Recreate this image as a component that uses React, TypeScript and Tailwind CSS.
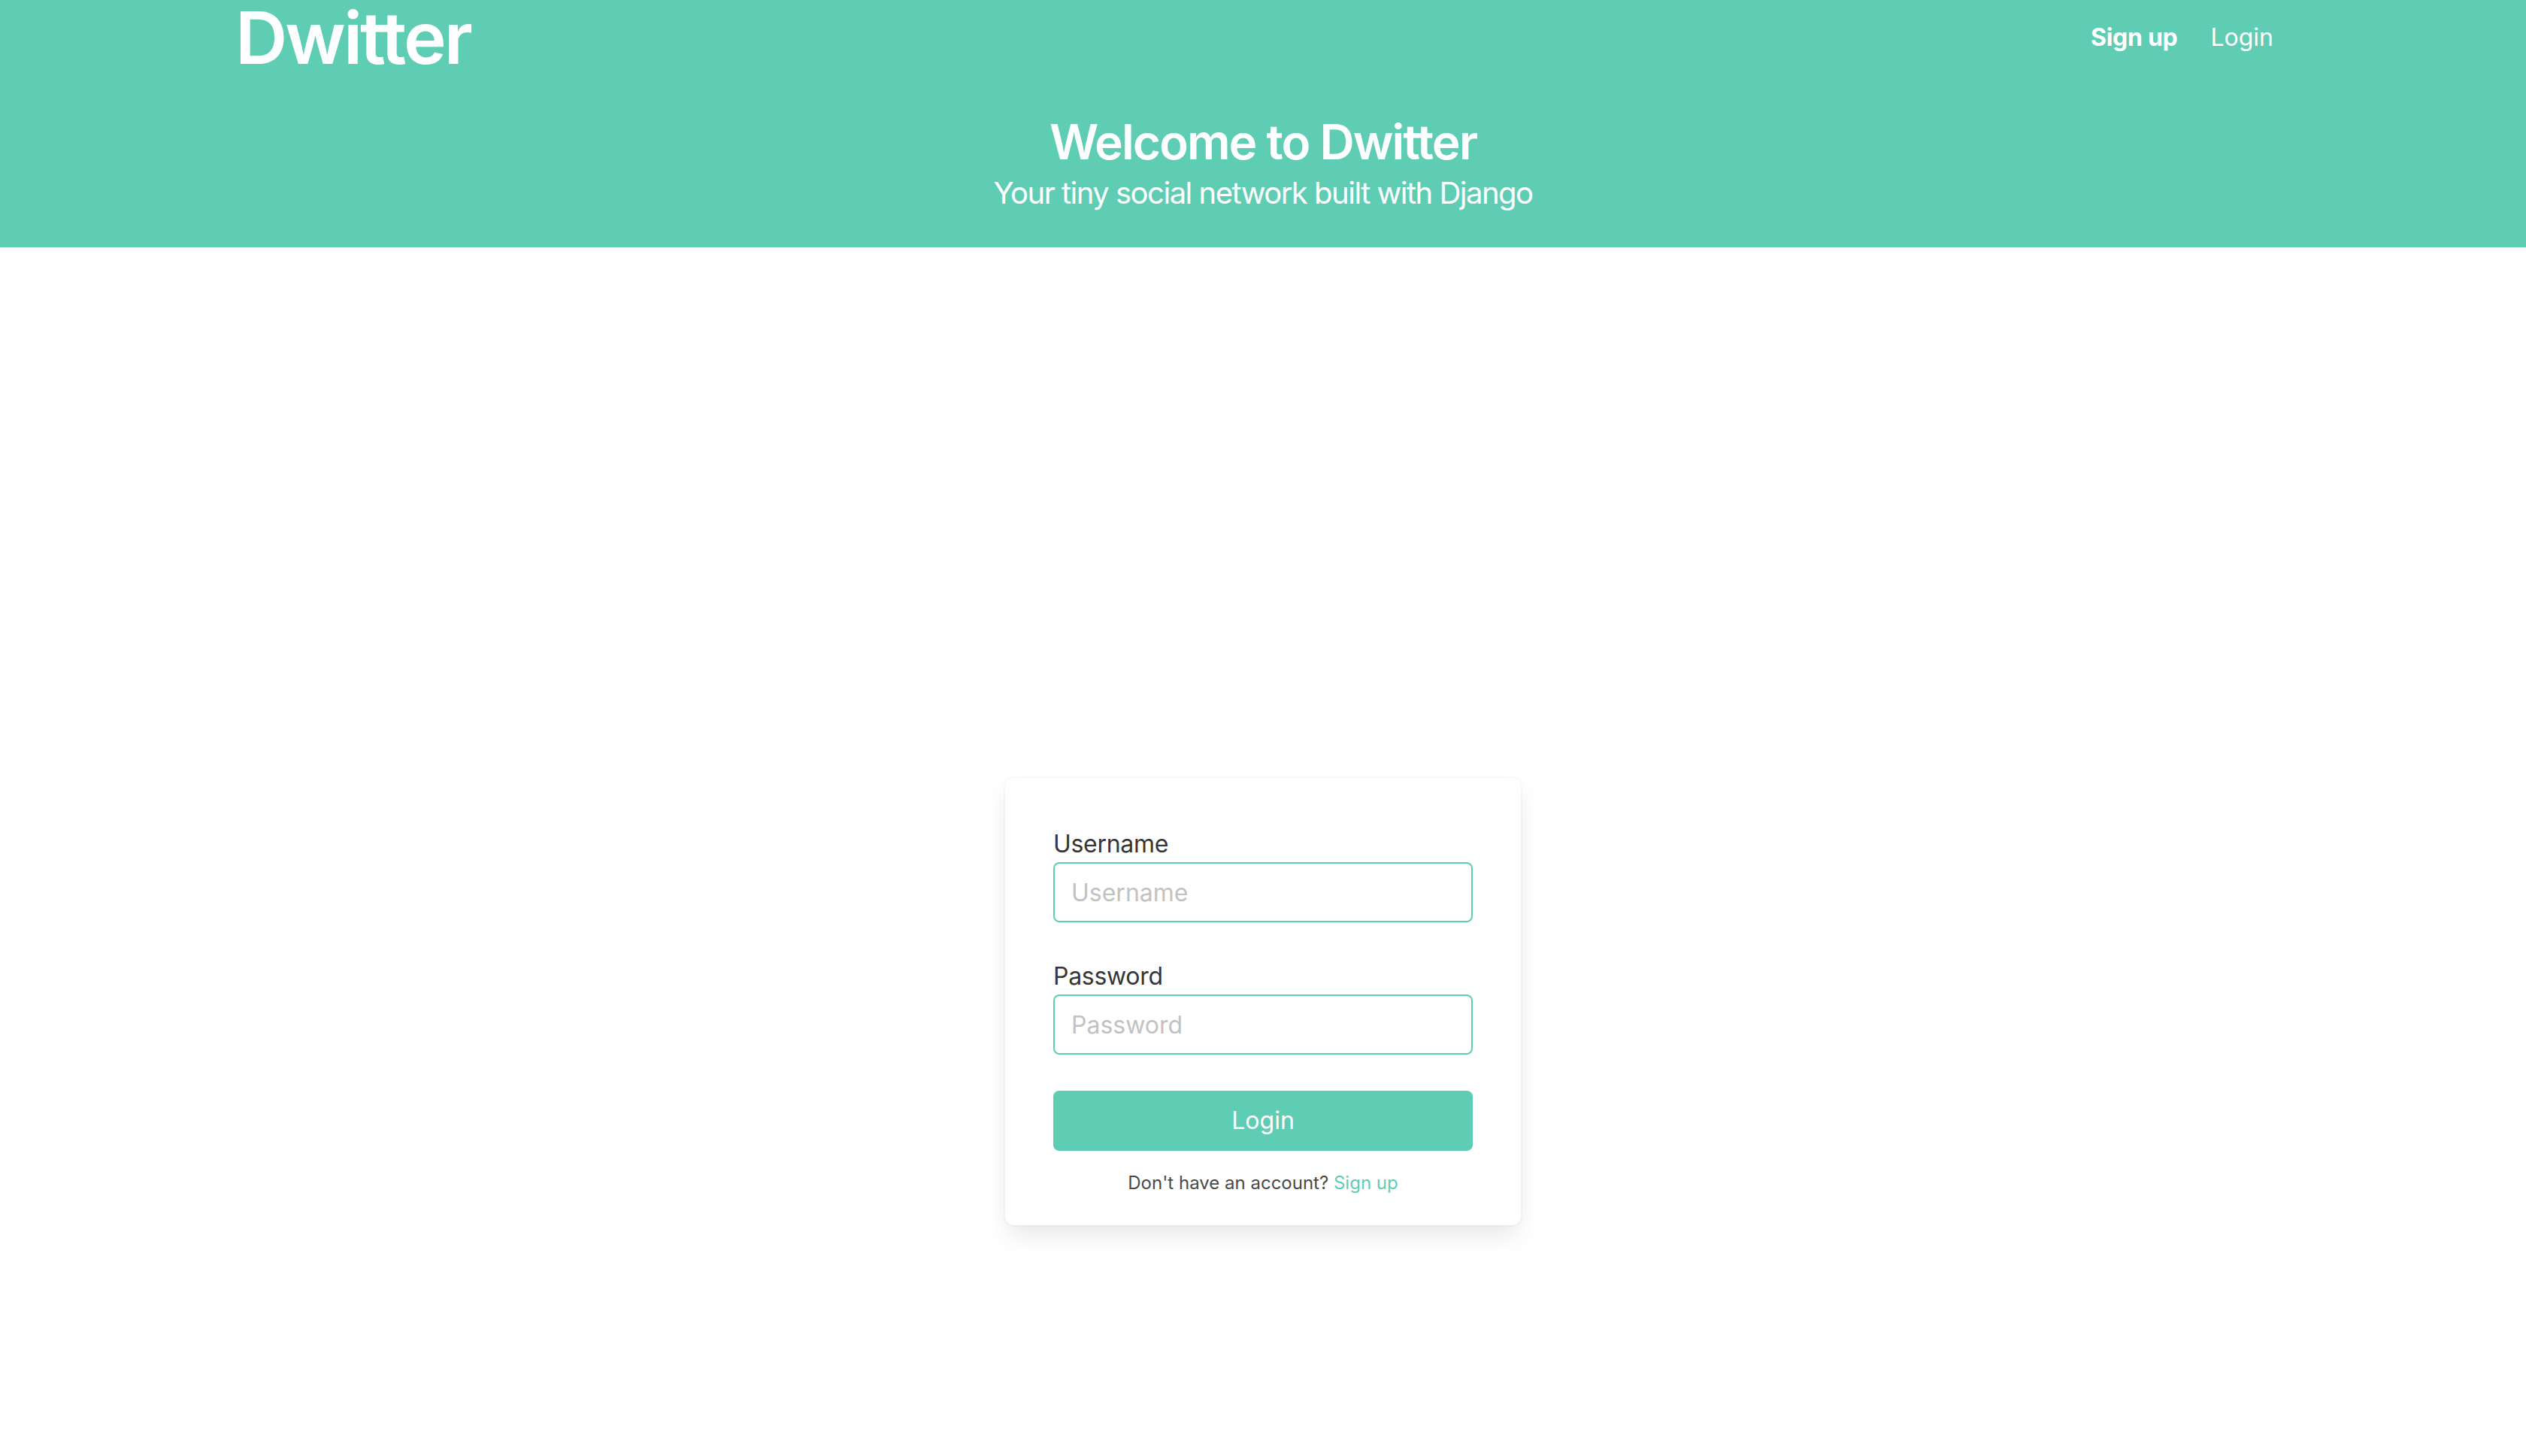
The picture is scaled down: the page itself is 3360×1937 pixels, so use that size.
import React from "react";

const font = { fontFamily: "Inter, 'Noto Sans', sans-serif" };

const Header = () => (
  <header className="bg-[#5fcdb4] text-white h-[329px] px-[313px]">
    <div className="flex justify-between items-start">
      <h1 className="text-[96px] leading-none font-semibold tracking-[-3px] mt-[2px]">Dwitter</h1>
      <nav className="flex items-center gap-[44px] pt-[26px] pr-[23px] text-[32px] leading-[48px]">
        <a className="font-bold tracking-[-0.3px]">Sign up</a>
        <a>Login</a>
      </nav>
    </div>
    <div className="text-center mt-[55px]">
      <h2 className="text-[64px] leading-[72px] font-semibold tracking-[-2px]">Welcome to Dwitter</h2>
      <p className="text-[40px] leading-[50px] mt-[7px] tracking-[-1.5px]">Your tiny social network built with Django</p>
    </div>
  </header>
);

const Field = ({ label, type }: { label: string; type: string }) => (
  <div>
    <label className="block text-[32px] leading-[48px] text-[#363636] tracking-[-0.3px]">{label}</label>
    <input
      type={type}
      placeholder={label}
      className="block w-full h-[80px] border-2 border-[#5fcdb4] rounded-[8px] px-[22px] text-[32px] text-[#363636] placeholder:text-[#c2c2c2] outline-none"
      style={font}
    />
  </div>
);

const LoginCard = () => (
  <div className="mx-auto mt-[706px] w-[686px] bg-white rounded-[12px] px-[64px] pt-[64px] pb-[38px] shadow-[0_16px_32px_-4px_rgba(10,10,10,0.1),0_0_0_2px_rgba(10,10,10,0.02)]">
    <Field label="Username" type="text" />
    <div className="mt-[48px]">
      <Field label="Password" type="password" />
    </div>
    <button
      className="mt-[48px] w-full h-[80px] rounded-[8px] bg-[#5fcdb4] text-white text-[32px]"
      style={font}
    >
      Login
    </button>
    <p className="mt-[25px] text-center text-[24px] leading-[36px] text-[#4a4a4a]">
      Don't have an account? <a className="text-[#5fcdb4]">Sign up</a>
    </p>
  </div>
);

export default function App() {
  return (
    <div className="min-h-[1937px] bg-white" style={font}>
      <Header />
      <LoginCard />
    </div>
  );
}
